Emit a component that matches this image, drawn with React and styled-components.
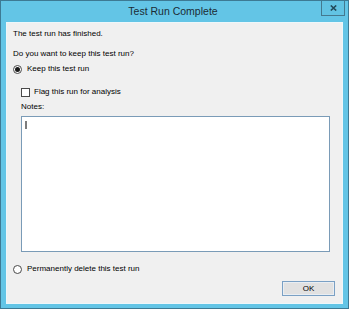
import React from 'react';
import styled, { createGlobalStyle } from 'styled-components';

const Global = createGlobalStyle`
  html, body { margin: 0; padding: 0; background: #ffffff; }
  body { font-family: "Liberation Sans", Arial, sans-serif; }
  * { box-sizing: border-box; }
`;

const Window = styled.div`
  width: 349px;
  height: 309px;
  border: 1px solid #3d7a94;
  background: #63c5e6;
  display: flex;
  flex-direction: column;
`;

const TitleBar = styled.div`
  height: 21px;
  display: grid;
  grid-template-columns: 1fr auto 1fr;
  align-items: start;
  padding-right: 3px;
`;

const Title = styled.div`
  grid-column: 2;
  height: 21px;
  line-height: 21px;
  font-size: 10.5px;
  color: #1c2c34;
  white-space: nowrap;
`;

const CloseButton = styled.div`
  grid-column: 3;
  justify-self: end;
  width: 24px;
  height: 15px;
  border: 1px solid #44798f;
  border-top: none;
  background: #62c3e3;
  display: flex;
  align-items: center;
  justify-content: center;
`;

const Client = styled.div`
  flex: 1;
  margin: 0 5px 4px 5px;
  border: 1px solid #eef7fa;
  background: #f0f0f0;
  display: flex;
  flex-direction: column;
  padding: 0 6px;
  color: #000;
  font-size: 8px;
`;

const Row = styled.div`
  height: 12px;
  line-height: 12px;
  margin-top: ${p => p.$mt}px;
  padding-left: ${p => p.$indent || 0}px;
  display: flex;
  align-items: center;
  white-space: nowrap;
`;

const Radio = styled.span`
  width: 9px;
  height: 9px;
  border-radius: 50%;
  border: 1px solid #4a4a4a;
  background: #fff;
  margin-right: 5px;
  display: inline-flex;
  align-items: center;
  justify-content: center;
  flex: none;
  &::after {
    content: "";
    display: ${p => (p.$checked ? 'block' : 'none')};
    width: 5px;
    height: 5px;
    border-radius: 50%;
    background: #1a1a1a;
  }
`;

const Checkbox = styled.span`
  width: 9px;
  height: 9px;
  border: 1px solid #4a4a4a;
  background: #fff;
  margin-right: 4px;
  flex: none;
`;

const Notes = styled.div`
  margin-top: 3px;
  margin-left: 8px;
  width: 309px;
  height: 136px;
  border: 1px solid #7a9bb7;
  background: #fff;
  padding: 4px 3px;
`;

const Caret = styled.span`
  display: block;
  width: 2px;
  height: 8px;
  background: #7c7c7c;
`;

const Footer = styled.div`
  margin-top: 6px;
  display: flex;
  justify-content: flex-end;
  padding-right: 1px;
`;

const Button = styled.div`
  width: 53px;
  height: 15px;
  border: 1px solid #7aa0c4;
  box-shadow: inset 0 0 0 1px #e9eef3;
  background: #e1e1e1;
  font-size: 8px;
  line-height: 13px;
  text-align: center;
  color: #000;
`;

export default function App() {
  return (
    <>
      <Global />
      <Window>
        <TitleBar>
          <Title>Test Run Complete</Title>
          <CloseButton>
            <svg width="7" height="6" viewBox="0 0 7 6">
              <path d="M0.8 0.5 L6.2 5.5 M6.2 0.5 L0.8 5.5" stroke="#234a5a" strokeWidth="1.6" fill="none" />
            </svg>
          </CloseButton>
        </TitleBar>
        <Client>
          <Row $mt={5}>The test run has finished.</Row>
          <Row $mt={8}>Do you want to keep this test run?</Row>
          <Row $mt={3}><Radio $checked />Keep this test run</Row>
          <Row $mt={11} $indent={8}><Checkbox />Flag this run for analysis</Row>
          <Row $mt={3} $indent={8}>Notes:</Row>
          <Notes><Caret /></Notes>
          <Row $mt={11}><Radio />Permanently delete this test run</Row>
          <Footer><Button>OK</Button></Footer>
        </Client>
      </Window>
    </>
  );
}
